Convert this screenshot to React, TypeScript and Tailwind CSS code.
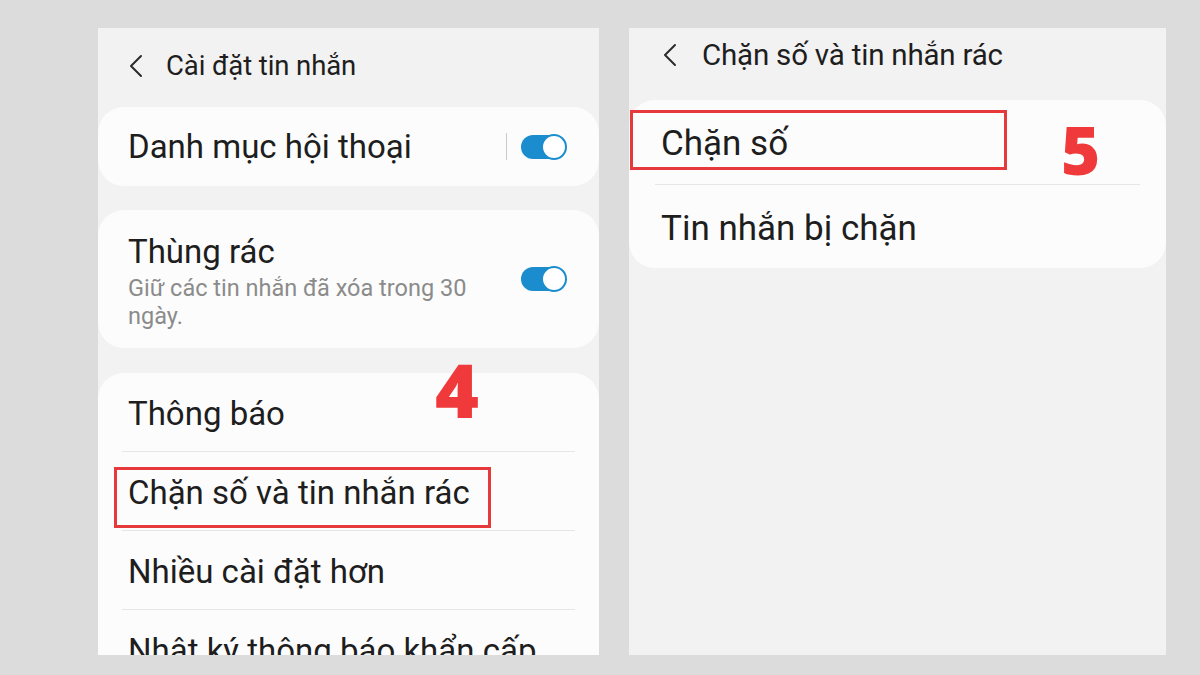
import React from 'react';

const FONT = { fontFamily: 'Roboto, "Noto Sans", "Liberation Sans", sans-serif' };

const Chevron = () => (
  <svg width="16" height="24" viewBox="0 0 16 24" fill="none">
    <polyline points="13,2 3,12 13,22" stroke="#2b2b2b" strokeWidth="2" strokeLinecap="round" strokeLinejoin="round" />
  </svg>
);

const Toggle = () => (
  <div className="relative w-[46px] h-[26px]">
    <div className="absolute left-0 top-[1px] w-[44px] h-[24px] rounded-full bg-[#1b8dcf]" />
    <div className="absolute right-0 top-0 w-[26px] h-[26px] rounded-full bg-white border-2 border-[#1b8dcf]" />
  </div>
);

const Divider = ({ inset }: { inset: string }) => <div className={`h-px bg-[#e6e6e6] ${inset}`} />;

export default function App() {
  return (
    <div className="w-[1200px] h-[675px] bg-[#dcdcdc] flex gap-[30px] pl-[98px] pt-[28px] text-[#1e1e1e]" style={FONT}>
      {/* Left: Cài đặt tin nhắn */}
      <div className="relative w-[501px] h-[627px] bg-[#f2f2f2] overflow-hidden flex flex-col">
        <div className="h-[79px] flex items-center pl-[30px] pb-[4px] gap-[22px] shrink-0">
          <Chevron />
          <span className="text-[27.5px] tracking-[-0.1px]">Cài đặt tin nhắn</span>
        </div>

        <div className="h-[79px] bg-[#fcfcfc] rounded-[26px] flex items-center pl-[30px] pr-[32px] shrink-0">
          <span className="flex-1 text-[33px]">Danh mục hội thoại</span>
          <div className="w-px h-[27px] bg-[#c9c9c9] mr-[14px]" />
          <Toggle />
        </div>

        <div className="mt-[24px] h-[138px] bg-[#fcfcfc] rounded-[26px] flex items-center pl-[30px] pr-[32px] shrink-0">
          <div className="flex-1 flex flex-col pt-[4px]">
            <span className="text-[33px] leading-[38px]">Thùng rác</span>
            <span className="text-[23.5px] leading-[28px] text-[#8b8b8b] mt-[3px] w-[370px]">Giữ các tin nhắn đã xóa trong 30 ngày.</span>
          </div>
          <div className="self-start mt-[56px]">
            <Toggle />
          </div>
        </div>

        <div className="mt-[25px] bg-[#fcfcfc] rounded-t-[26px] flex flex-col shrink-0">
          {['Thông báo', 'Chặn số và tin nhắn rác', 'Nhiều cài đặt hơn', 'Nhật ký thông báo khẩn cấp'].map((label, i) => (
            <div key={label} className="flex flex-col">
              {i > 0 && <Divider inset="mx-[24px]" />}
              <div className="h-[78px] flex items-center pl-[30px] pt-[3px] text-[33px] whitespace-nowrap">{label}</div>
            </div>
          ))}
        </div>

        <div className="absolute left-[16px] top-[439px] w-[377px] h-[61px] border-[3px] border-[#e5393c]" />
        <div className="absolute left-[337px] top-[324px] text-[75px] font-extrabold text-[#f0393a] leading-none" style={{ fontFamily: '"Open Sans", sans-serif' }}>4</div>
      </div>

      {/* Right: Chặn số và tin nhắn rác */}
      <div className="relative w-[537px] h-[627px] bg-[#f2f2f2] flex flex-col">
        <div className="h-[72px] flex items-center pl-[33px] pb-[18px] gap-[24px] shrink-0">
          <Chevron />
          <span className="text-[29.5px] tracking-[-0.2px]">Chặn số và tin nhắn rác</span>
        </div>

        <div className="bg-[#fcfcfc] rounded-[26px] flex flex-col shrink-0">
          <div className="h-[84px] flex items-center pl-[32px] pt-[5px] text-[35px]">Chặn số</div>
          <Divider inset="mx-[26px]" />
          <div className="h-[83px] flex items-center pl-[32px] pt-[6px] text-[35px]">Tin nhắn bị chặn</div>
        </div>

        <div className="absolute left-[1px] top-[82px] w-[377px] h-[60px] border-[3px] border-[#e5393c]" />
        <div className="absolute left-[432px] top-[88px] text-[67px] font-extrabold text-[#f0393a] leading-none" style={{ fontFamily: '"Open Sans", sans-serif' }}>5</div>
      </div>
    </div>
  );
}
